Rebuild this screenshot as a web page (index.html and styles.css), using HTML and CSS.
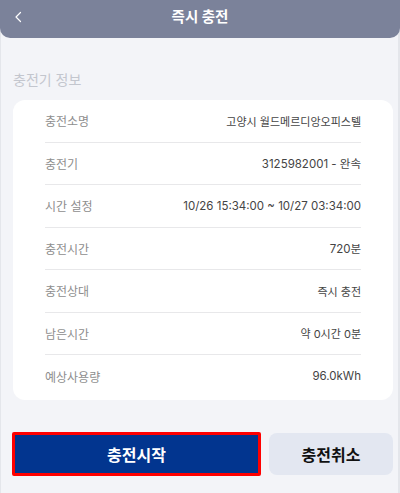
FILE: index.html
```html
<!DOCTYPE html>
<html lang="ko">
<head>
    <meta charset="UTF-8">
    <meta name="viewport" content="width=device-width, initial-scale=1.0">
    <title>즉시 충전</title>
    <link rel="stylesheet" href="styles.css">
</head>
<body>
    <div class="screen">
        <header class="topbar">
            <button class="back" aria-label="뒤로">
                <svg width="8" height="12" viewBox="0 0 8 12">
                    <polyline points="6.5,1.5 2,6 6.5,10.5" fill="none" stroke="#fff" stroke-width="1.2" stroke-linecap="round" stroke-linejoin="round"/>
                </svg>
            </button>
            <h1 class="title">즉시 충전</h1>
            <span></span>
        </header>

        <main class="content">
            <h2 class="section-title">충전기 정보</h2>
            <ul class="info-card">
                <li class="info-row"><span class="label">충전소명</span><span class="value">고양시 월드메르디앙오피스텔</span></li>
                <li class="info-row"><span class="label">충전기</span><span class="value num">3125982001 - 완속</span></li>
                <li class="info-row"><span class="label">시간 설정</span><span class="value num">10/26 15:34:00 ~ 10/27 03:34:00</span></li>
                <li class="info-row"><span class="label">충전시간</span><span class="value num">720분</span></li>
                <li class="info-row"><span class="label">충전상대</span><span class="value">즉시 충전</span></li>
                <li class="info-row"><span class="label">남은시간</span><span class="value">약 0시간 0분</span></li>
                <li class="info-row"><span class="label">예상사용량</span><span class="value num">96.0kWh</span></li>
            </ul>
        </main>

        <div class="actions">
            <button class="btn btn-primary">충전시작</button>
            <button class="btn btn-secondary">충전취소</button>
        </div>
    </div>
</body>
</html>
```

FILE: styles.css
```css
* {
    box-sizing: border-box;
}
body {
    margin: 0;
    font-family: Inter, "Noto Sans CJK KR", sans-serif;
    background-color: #f3f4f8;
}
.screen {
    width: 400px;
    height: 493px;
    background: #f3f4f8;
    box-shadow: inset 1px 0 #e4e6eb, inset -2px 0 #e4e6eb;
    overflow: hidden;
}
.topbar {
    height: 38px;
    background: #7b829a;
    border-radius: 0 0 10px 10px;
    display: grid;
    grid-template-columns: 40px 1fr 40px;
    align-items: center;
    padding-bottom: 4px;
}
.back {
    background: none;
    border: none;
    padding: 0 0 0 14px;
    height: 14px;
    display: flex;
    align-items: center;
    cursor: pointer;
}
.title {
    margin: 0;
    text-align: center;
    color: #fff;
    font-size: 14.5px;
    font-weight: 700;
    line-height: 20px;
}
.content {
    padding: 0 7px 0 13px;
}
.section-title {
    margin: 32px 0 10px;
    font-size: 14px;
    font-weight: 400;
    line-height: 20px;
    color: #c3c6ce;
}
.info-card {
    list-style: none;
    margin: 0;
    padding: 0 32px 2.5px;
    background: #fff;
    border-radius: 12px;
}
.info-row {
    height: 42.5px;
    display: flex;
    align-items: center;
    justify-content: space-between;
    border-bottom: 1px solid #e8e8ea;
}
.info-row:last-child {
    border-bottom: none;
}
.label {
    font-size: 12px;
    color: #8e8e8e;
}
.value {
    font-size: 11px;
    color: #444;
}
.value.num {
    font-size: 11.5px;
}
.actions {
    margin-top: 32px;
    padding: 0 7px 0 12px;
    display: flex;
    align-items: center;
    gap: 8px;
}
.btn {
    font-family: inherit;
    font-size: 16px;
    font-weight: 700;
    border: none;
    cursor: pointer;
}
.btn-primary {
    flex: 0 0 249px;
    height: 44px;
    background: #02358f;
    color: #fff;
    border: 3px solid #ff0000;
    border-radius: 2px;
}
.btn-secondary {
    flex: 1;
    height: 42px;
    background: #e3e7f1;
    color: #111;
    border-radius: 8px;
}
```
